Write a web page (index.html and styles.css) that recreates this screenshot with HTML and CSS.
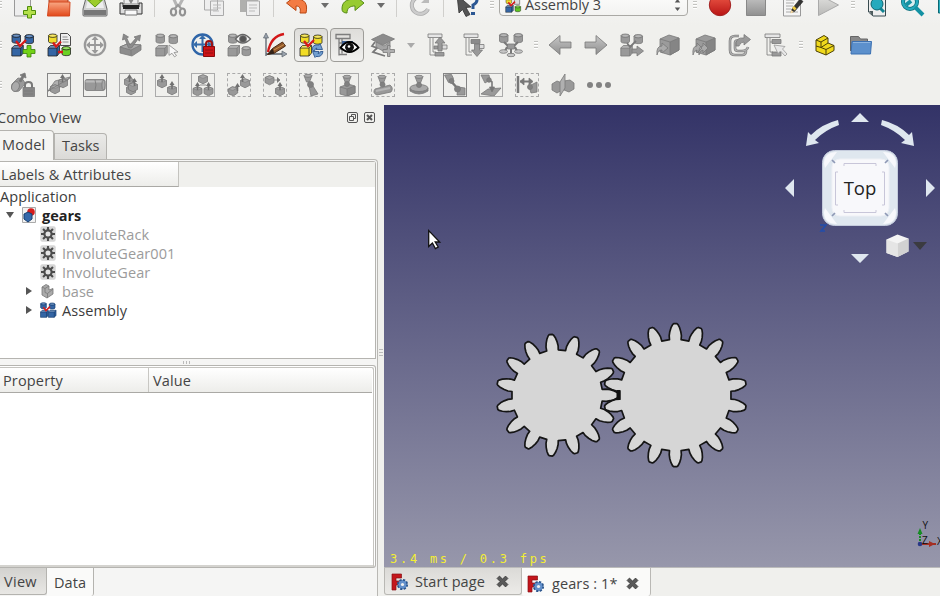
FILE: index.html
```html
<!DOCTYPE html>
<html lang="en">
<head>
<meta charset="utf-8">
<title>gears</title>
<link rel="stylesheet" href="styles.css">
</head>
<body>
<svg class="defs" aria-hidden="true">
  <defs>
    <linearGradient id="metal" x2="0" y2="1"><stop stop-color="#c6c6c6"/><stop offset="1" stop-color="#909090"/></linearGradient>
    <linearGradient id="pale" x2="0" y2="1"><stop stop-color="#e2e2e0"/><stop offset="1" stop-color="#b9b9b7"/></linearGradient>
    <linearGradient id="orange" x2="0" y2="1"><stop stop-color="#f9a884"/><stop offset="1" stop-color="#e2481a"/></linearGradient>
    <linearGradient id="red" x2="0" y2="1"><stop stop-color="#ee5a48"/><stop offset="1" stop-color="#b81414"/></linearGradient>
    <g id="cyl"><path d="M.5 2v6c0 2.200 8.500 2.200 8.500 0V2" fill="currentColor"/><ellipse cx="4.750" cy="2.200" rx="4.250" ry="1.700" fill="currentColor"/><ellipse cx="4.750" cy="2.200" rx="3" ry="1" fill="#fff" fill-opacity=".3" stroke="none"/></g>
    <g id="cube"><path d="M.5 3L3 .5h9V8L9.500 11h-9z" fill="currentColor"/><path d="M.5 3H9.500L12 .5M9.500 3v8" fill="none"/><path d="M1 3L3 .8h8.500L9.300 3z" fill="#fff" fill-opacity=".25" stroke="none"/></g>
    <g id="box"><path d="M.5 2.500L5 .7l4.500 1.800v5L5 9.800.5 7.500z" fill="currentColor"/><path d="M.5 2.500L5 4.500l4.500-2L5 .7z" fill="#fff" fill-opacity=".15" stroke-width=".5"/></g>
    <g id="cone"><path d="M0 1.500L2.500 8h3L8 1.500z" fill="currentColor"/><ellipse cx="4" cy="1.800" rx="4" ry="1.500" fill="#aaa"/></g>
    <path id="up" d="M0 4L2.500 0 5 4H3.300v4H1.700V4z" fill="#707070" stroke="none"/>
    <g id="trio"><use href="#cyl" x=".5" y=".5"/><use href="#cyl" x="13.500" y="1"/><use href="#cube" x=".3" y="12"/></g>
    <path id="joins" d="M5 8l4 5 6-6M9 14v-3" stroke="#d61b1b" stroke-width="2.300" fill="none"/>
    <g id="fclogo"><path d="M0 0h9.500v4H4v3h4v4H4v5H0z" fill="#c4161c" stroke="#861014" stroke-width=".7"/><circle cx="10.500" cy="10.500" r="4.600" fill="#6390cb" stroke="#2c568e" stroke-width="2" stroke-dasharray="2.200 1.400"/><circle cx="10.500" cy="10.500" r="3.800" fill="#6390cb"/><circle cx="10.500" cy="10.500" r="1.600" fill="#f0f0ee"/></g>
    <g id="gearicon"><rect x=".3" y=".3" width="15.400" height="15.400" rx="2" fill="#d6d6d6"/><path d="M8 1v14M1 8h14M3.050 3.050l9.900 9.900M12.950 3.050l-9.900 9.900" stroke="#4c4c4c" stroke-width="2.100"/><circle cx="8" cy="8" r="3.600" fill="#e4e4e4" stroke="#4c4c4c" stroke-width="2.200"/></g>
    <path id="cross" d="M1 3.200L3.200 1 6 3.800 8.800 1 11 3.200 8.200 6 11 8.800 8.800 11 6 8.200 3.200 11 1 8.800 3.800 6z" fill="#5a5a5a" stroke="#3e3e3e" stroke-width=".8"/>
  </defs>
</svg>

<header class="toolbars">
  <div class="bar">
    <i class="grip start"></i>
    <span class="tool"><svg viewBox="0 0 24 24"><path d="M3.500 0h16v23h-16z" fill="#eee" stroke="#999"/><path d="M16.500 13.500h4v4h4v4h-4v3.500h-4v-3.500h-4v-4h4z" fill="#b4e04a" stroke="#4e8d0c"/></svg></span>
    <span class="tool"><svg viewBox="0 0 24 24"><path d="M2 9V3h19v6" fill="#e77752" stroke="#a33a1b"/><path d="M.5 23L2 9h21l-.5 14z" fill="url(#orange)" stroke="#d4481f"/></svg></span>
    <span class="tool"><svg viewBox="0 0 24 24"><path d="M3 5h18l3 11v6q0 1-1 1H1q-1 0-1-1v-6z" fill="#d0d0d0" stroke="#666"/><path d="M1 17h22v5H1z" fill="#777"/><path d="M5 6h14l2 9H3z" fill="#eee"/><path d="M8 2h8v5h3.500L12 14 4.500 7H8z" fill="#9ccc2b" stroke="#5c9412"/></svg></span>
    <span class="tool"><svg viewBox="0 0 24 24"><path d="M5 0h14v11H5z" fill="#ececec" stroke="#888"/><path d="M9 6h6l-3 5z" fill="#888"/><path d="M1 10h3v4h16v-4h3v11H1z" fill="#ddd" stroke="#333"/><path d="M4 12h16v4H4z" fill="#222"/><path d="M6 17h12v5H6z" fill="#fafafa" stroke="#777"/></svg></span>
    <i class="sep"></i>
    <span class="tool"><svg viewBox="0 0 24 24"><path d="M5 0l6 13M20 0l-7 13" stroke="#b5b5b5" stroke-width="3"/><ellipse cx="7.500" cy="19" rx="2.600" ry="3.500" fill="none" stroke="#929292" stroke-width="2.200"/><ellipse cx="16.500" cy="19" rx="2.600" ry="3.500" fill="none" stroke="#929292" stroke-width="2.200"/><path d="M8.500 16l3.500-4 3.500 4" fill="none" stroke="#999" stroke-width="2"/></svg></span>
    <span class="tool"><svg viewBox="0 0 24 24"><path d="M2.500 2h13v15h-13zM8.500 8h13v14.500h-13z" fill="#eee" stroke="#aaa"/><path d="M11 12h8m-8 3h8m-8 3h6" stroke="#bbb"/></svg></span>
    <span class="tool"><svg viewBox="0 0 24 24"><path d="M2 2h18v17H2z" fill="#b0b0ae"/><path d="M8.500 8h13v14.500h-13z" fill="#eee" stroke="#aaa"/><path d="M11 12h8m-8 3h8m-8 3h6" stroke="#bbb"/></svg></span>
    <i class="sep"></i>
    <span class="tool"><svg viewBox="0 0 24 24"><path d="M1.500 10L11 2.500V6c9 0 12 5 10 14h-6c1-4 0-7-4-7v4.500z" fill="#f37b43" stroke="#b84713"/></svg></span>
    <i class="drop"></i>
    <span class="tool"><svg viewBox="0 0 24 24"><path d="M23 10L14 2.500V6C4 6 1 10 1 16q0 4 5 4c0-5 3-7 8-7v4.500z" fill="#97cb32" stroke="#578b17"/></svg></span>
    <i class="drop"></i>
    <i class="sep"></i>
    <span class="tool"><svg viewBox="0 0 24 24"><path d="M20 16A8.500 8.500 0 1 1 18 6" fill="none" stroke="#aaa" stroke-width="4"/><path d="M20 16A8.500 8.500 0 1 1 18 6" fill="none" stroke="#ccc" stroke-width="2.500"/><path d="M13 10h8V2z" fill="#bbb"/></svg></span>
    <i class="sep"></i>
    <span class="tool"><svg viewBox="0 0 24 24"><path d="M2 2l14 12-5 .5 4 7-4 2-3.500-7L4 20z" fill="#555" stroke="#333" stroke-width=".8"/><path d="M15 6q7-5 7 1 0 3-4 5v4" fill="none" stroke="#2c5793" stroke-width="3"/><path d="M16 19h4v3h-4z" fill="#2c5793"/></svg></span>
    <i class="grip mid"></i>
    <div class="workbench">
      <svg class="wbicon" viewBox="0 0 24 24" stroke="#222" stroke-width=".7"><use href="#cyl" x="1" y=".5" color="#f0dc2c"/><path d="M14 0h8v11h-8z" fill="#ddd"/><use href="#cube" x=".5" y="12" color="#3465a4"/><use href="#cyl" x="14.500" y="12.500" color="#5ec421"/><use href="#joins"/></svg>
      <span class="wbname">Assembly 3</span>
      <svg class="spin" viewBox="0 0 7 14"><path d="M.8 4.500l2.700-3.500 2.700 3.500zM.8 9.500L3.500 13l2.700-3.500z" fill="#555"/></svg>
    </div>
    <i class="grip mid"></i>
    <span class="tool"><svg viewBox="0 0 24 24"><circle cx="12" cy="12" r="10.700" fill="url(#red)" stroke="#a32222"/></svg></span>
    <span class="tool"><svg viewBox="0 0 24 24"><path d="M2.500 2.500h19v20h-19z" fill="url(#metal)" stroke="#888"/></svg></span>
    <span class="tool"><svg viewBox="0 0 24 24"><path d="M3.500 1h17v22h-17z" fill="#f5f5f5" stroke="#999"/><path d="M6 7h9M6 10h8M6 13h7M6 16h5M6 19h12" stroke="#aaa"/><path d="M12 16l8-10 3 2.500-8.500 10-3.500 1z" fill="#333" stroke="#222" stroke-width=".6"/><path d="M11 17l3 2-3.500 1.500z" fill="#f5d8a0"/><path d="M12 15l2.700 2.500 1.800-2-2.500-2.500z" fill="#efcb40"/></svg></span>
    <span class="tool"><svg viewBox="0 0 24 24"><path d="M2.500 1.500v21l20-10.500z" fill="url(#pale)" stroke="#aaa"/></svg></span>
    <i class="grip"></i>
    <span class="tool"><svg viewBox="0 0 24 24"><path d="M3.500 1h17v22H8l-4.500-4z" fill="#eee" stroke="#394b50"/><path d="M4 18h4v5z" fill="#4c5b5d"/><circle cx="12" cy="11" r="6" fill="#25aabd" stroke="#0c6571"/><path d="M15 15l4 4" stroke="#128391" stroke-width="3"/></svg></span>
    <span class="tool"><svg viewBox="0 0 24 24"><circle cx="9" cy="9" r="7" fill="#d7eef0" stroke="#0b6d7a" stroke-width="4"/><circle cx="9" cy="9" r="7" fill="none" stroke="#23a9bc" stroke-width="2.500"/><path d="M5 12l5-4M14 14l8 8" stroke="#1391a3" stroke-width="4"/></svg></span>
    <span class="tool"><svg viewBox="0 0 24 24"><path d="M1.500 1v19h18V1z" fill="#29aebf" stroke="#0b6873"/></svg></span>
  </div>

  <div class="bar">
    <i class="grip start"></i>
    <span class="tool"><svg class="line" viewBox="0 0 24 24"><use href="#trio" color="#3465a4"/><use href="#joins"/><path d="M16 12.500h4v4h4v4h-4v3.500h-4v-3.500h-4v-4h4z" fill="#73d216" stroke="#3b7d0b"/></svg></span>
    <span class="tool"><svg class="line" viewBox="0 0 24 24"><use href="#cyl" x="1" y=".5" color="#f0dc2c"/><path d="M13.500.5h7l3 3v9h-10z" fill="#eee"/><path d="M15.500 4h5m-5 2.500h6m-6 2.500h6" stroke="#777"/><use href="#cube" x=".5" y="12" color="#3465a4"/><use href="#cyl" x="14.500" y="13" color="#6cd224"/><path d="M6 9.500l3 4 5-5M11 19h5" stroke="#d61b1b" stroke-width="2.300" fill="none"/></svg></span>
    <span class="tool"><svg viewBox="0 0 24 24" fill="none"><circle cx="12" cy="12" r="10.200" stroke="#999" stroke-width="2.200"/><path d="M12 5v14M5 12h14" stroke="#999" stroke-width="1.800"/><path d="M12 3l3.500 4h-7zM12 21l3.500-4h-7zM3 12l4-3.500v7zM21 12l-4-3.500v7z" fill="#999"/></svg></span>
    <span class="tool"><svg class="gray" viewBox="0 0 24 24"><path d="M1 14l7-3 14 1v5l-9 6L1 20z" fill="#8d8d8d"/><path d="M1 14l11 3 10-5-14-1z" fill="#a8a8a8"/><path d="M12 17v5.500" fill="none"/><path d="M9.500 15L6 6 3.500 7 4.500 1l5 3-1.800 1L11 12l6-7-2-1 6.500-2-1 6-1.800-1.500L12.500 15z" fill="#8b8b8b"/></svg></span>
    <span class="tool"><svg class="gray" viewBox="0 0 24 24"><use href="#trio"/><path d="M14 12l9 7-4 .5 2.500 3-2 1.300-2.500-3.500-3 2z" fill="#f8f8f8" stroke="#888"/></svg></span>
    <span class="tool"><svg viewBox="0 0 24 24" fill="none"><circle cx="11.500" cy="11.500" r="10" stroke="#2f65a8" stroke-width="2.300"/><path d="M11.500 5v14M5 11.500h14" stroke="#356ba9" stroke-width="2"/><path d="M11.500 2l3.500 4H8zM2 11.500L6 8v7zM21 11.500L17 8v7z" fill="#356ba9"/><path d="M15 14v-3q0-3 3-3t3 3v3" stroke="#9d1010" stroke-width="2"/><path d="M12.500 13.500h11v10h-11z" fill="#ce1216" stroke="#870b0d"/><path d="M14 17h8m-8 3h8" stroke="#921013"/></svg></span>
    <span class="tool"><svg class="gray" viewBox="0 0 24 24"><use href="#cyl" x="1" y=".5"/><use href="#cube" x=".5" y="12"/><use href="#cyl" x="14.500" y="13"/><path d="M8.500 6q7-9 15 0-8 8-15 0z" fill="#f5f5f5" stroke="#666" stroke-width="1.300"/><circle cx="16" cy="6" r="3.500" fill="#555"/></svg></span>
    <span class="tool"><svg viewBox="0 0 24 24" fill="none"><path d="M3 23V3M3 21h18" stroke="#59616b" stroke-width="1.300"/><path d="M.5 5L3 0l2.500 5zM19 18l5 3-5 3z" fill="#9aa3ad" stroke="#59616b" stroke-width=".7"/><path d="M5 19Q8 3 21 1" stroke="#d31818" stroke-width="2.300"/><path d="M4.500 21.500l5-6 10-6.500 3 4-11 7z" fill="#91572b" stroke="#4d2a10"/><path d="M4.500 21.500l5-6 2 5z" fill="#332319"/><path d="M11 17l10-5.500" stroke="#c9924e"/></svg></span>
    <span class="tool on"><svg class="line" viewBox="0 0 24 24"><use href="#cyl" x="1" y=".5" color="#f1dc25"/><use href="#cyl" x="14" y="1.500" color="#f1dc25"/><use href="#cube" x=".5" y="12" color="#f1dc25"/><use href="#joins"/><path d="M13 17q0-6 7-5l1-1.500 2.500 6h-6.500l1-1.500q-2 0-2.500 3zM24 18.500q-1 6-7 5l-1 1-2.500-6h6.500l-1 2q2 0 2.500-2z" fill="#729fcf" stroke="#204a87"/></svg></span>
    <span class="tool on"><svg viewBox="0 0 24 24" fill="none"><path d="M1 1.500h14v4H1zM4 5.500v17M4 10h4M4 16h4M4 21.500h8M7 5.500v15" stroke="#7d7d7d" stroke-width="1.300"/><path d="M7 8h11v5H7z" fill="#3d5f92"/><path d="M5.500 14.500q9-11 18 0-9 9-18 0z" fill="#fff" stroke="#000" stroke-width="1.800"/><circle cx="14.500" cy="14.200" r="4.400" fill="#111"/><circle cx="14" cy="13.500" r="1.300" fill="#fff"/></svg></span>
    <span class="tool"><svg class="gray" viewBox="0 0 24 24"><path d="M4 9l-3 4 5 2-4 4 12 4" fill="none" stroke-width="1.800"/><path d="M5 9v5l7 4 7-4V9l-6 4z" fill="#a4a4a4"/><path d="M.5 6.500L12 1l11.500 5L12 12z" fill="#8c8c8c"/><path d="M16.500 12.500h2.500v4h4.500v3H19v4h-2.500v-4h-4.500v-3h4.500z" fill="#b0b0b0"/></svg></span>
    <i class="drop dim"></i>
    <span class="tool"><svg class="gray" viewBox="0 0 24 24"><path d="M1 1h14v3.500H1z" fill="#e6e6e6"/><path d="M3 5v17h6M6 5v14h3" fill="none"/><path d="M8 19.500h9v3.500H8zM7 13h4v3H7z" fill="#9a9a9a"/><path d="M15 12h5v4h-5z" fill="#ddd"/><path d="M13 4l5 6h-3v8h-4v-8H8z" fill="#999"/></svg></span>
    <span class="tool"><svg class="gray" viewBox="0 0 24 24"><path d="M1 1h14v3.500H1z" fill="#e6e6e6"/><path d="M3 5v17h6M6 5v14h3" fill="none"/><path d="M16 11.500h5v4h-5z" fill="#ddd"/><path d="M8 6.500h9v4H8z" fill="#8b8b8b"/><path d="M11.500 11h5v6h3L14 23.500 8.500 17h3z" fill="#999"/></svg></span>
    <span class="tool"><svg class="gray" viewBox="0 0 24 24"><use href="#cyl" x="0" y="0"/><use href="#cyl" x="14.500" y="0"/><path d="M5 9l4 4M19 9l-4 4M12 14v7M8 14l-2 4m10-4l2 4" fill="none" stroke-width="2"/><path d="M8.500 11h7v5h-7z" fill="#999"/><ellipse cx="4.500" cy="18.500" rx="4" ry="1.800" fill="#c6c6c6"/><ellipse cx="19.500" cy="18.500" rx="4" ry="1.800" fill="#c6c6c6"/><ellipse cx="12" cy="22" rx="4" ry="1.700" fill="#c6c6c6"/></svg></span>
    <i class="grip"></i>
    <span class="tool"><svg class="gray" viewBox="0 0 24 24"><path d="M1 12L12 2.500V9h11v6H12v6.500z" fill="url(#metal)"/></svg></span>
    <span class="tool"><svg class="gray" viewBox="0 0 24 24"><path d="M23 12L12 2.500V9H1v6h11v6.500z" fill="url(#metal)"/></svg></span>
    <span class="tool"><svg class="gray" viewBox="0 0 24 24"><use href="#trio"/><path d="M7 10l3 4 6-6" fill="none" stroke-width="1.800"/><path d="M12 16h5v-3l6.500 5-6.500 5v-3h-5z" fill="#999"/></svg></span>
    <span class="tool"><svg class="gray" viewBox="0 0 24 24"><path d="M4 6l9-4 10 3v12l-9 5-10-3z" fill="#9b9b9b"/><path d="M4 6l10 3 9-4v12l-9 5V9" fill="#858585" /><path d="M1 22q-1-9 5-9v-3l6 5-6 5v-3q-4 0-5 5z" fill="#aaa"/></svg></span>
    <span class="tool"><svg class="gray" viewBox="0 0 24 24"><path d="M4 6l9-4 10 3v12l-9 5-10-3z" fill="#9b9b9b"/><path d="M4 6l10 3 9-4v12l-9 5V9" fill="#858585" /><path d="M1 22q-1-9 4-9v-3l5 5-5 5v-3q-3 0-4 5zM7 22q-1-9 4-9v-3l5 5-5 5v-3q-3 0-4 5z" fill="#aaa"/></svg></span>
    <span class="tool"><svg class="gray" viewBox="0 0 24 24"><path d="M11 3H7Q2 3 2 8v9q0 5 5 5h7q4 0 4-4M11 7.500H9Q7 7.500 7 10v5q0 3 3 3h4q5 0 6-4" fill="none" stroke="#808080" stroke-width="2.600"/><path d="M11 3H7Q2 3 2 8v9q0 5 5 5h7q4 0 4-4M11 7.500H9Q7 7.500 7 10v5q0 3 3 3h4q5 0 6-4" fill="none" stroke="#b2b2b2" stroke-width="1.200"/><path d="M8 13q-1-9 8-8V1.500l6.500 5L16 12V9q-4 0-5 4z" fill="#999"/></svg></span>
    <span class="tool"><svg class="gray" viewBox="0 0 24 24"><path d="M1 1h15v3.500H1z" fill="#e6e6e6"/><path d="M3 5v17h5M6 5v14h3M6 9h3" fill="none"/><path d="M8 6.500h9v4H8zM8 19h9v4H8z" fill="#999"/><path d="M10 12l11 1.500-2.500 2.500 4.500 5-2 2-4.500-5-2.500 2.500z" fill="#e8e8e8" stroke="#999"/></svg></span>
    <i class="grip"></i>
    <span class="tool"><svg viewBox="0 0 24 24" stroke="#4c4106" stroke-linejoin="round"><path d="M3 7l8-4.500 4 2.500v5l6 2.500v5l-8 4.500-10-4z" fill="#f0d91d"/><path d="M3 7l5 2 7-4M8 9v5.500L13 16.500l8-4M13 16.500V22M3 13l5 1.500 7-4.500" fill="none"/></svg></span>
    <span class="tool"><svg viewBox="0 0 24 24"><path d="M1.500 18V3.500h8l2 2.500h7v6" fill="#888" stroke="#666"/><path d="M3 8.500h19.500l-1 12.500H2z" fill="#5c90cc" stroke="#3b70b2"/><path d="M4 9.500h17.500" stroke="#8db4df"/></svg></span>
  </div>

  <div class="bar">
    <i class="grip start"></i>
    <span class="tool"><svg class="gray" viewBox="0 0 24 24"><path d="M1 11l6-6q6 0 7 6l-6 7q-6 2-7.500-3z" fill="#999"/><ellipse cx="4.500" cy="13.500" rx="3.800" ry="5" transform="rotate(20 4.500 13.500)" fill="#aaa"/><path d="M8 8l3-5-2-1 5-2 1 5-2-1-3 5z" fill="#777"/><path d="M14 15v-3q0-3 3.500-3t3.500 3v3" fill="none" stroke-width="2"/><path d="M12 14.500h11.500v9H12z" fill="#858585"/><path d="M13 18h9m-9 3h9"/></svg></span>
    <span class="tool"><svg class="gray boxed" viewBox="0 0 24 24"><path d="M1 18L8 8l15-4-7 9z" fill="#b0b0b0"/><use href="#box" x="3" y="11"/><use href="#box" x="11" y="5"/><use href="#up" x="13" y="1"/><path d="M1 18l22-13"/></svg></span>
    <span class="tool"><svg class="gray boxed" viewBox="0 0 24 24"><rect x="2" y="6.500" width="20" height="11" rx="2" fill="#999"/><path d="M2.500 8.500h19" stroke="#bbb" stroke-width="2"/><path d="M12 7q2 5 0 10" fill="none"/><ellipse cx="20.500" cy="12" rx="1.600" ry="5" fill="#aaa"/></svg></span>
    <span class="tool"><svg class="gray boxed soft" viewBox="0 0 24 24"><use href="#box" x="5" y="4"/><use href="#box" x="7" y="12"/><use href="#box" x="9" y="9"/><use href="#up" x="8" y="1"/><use href="#up" x="13" y="5"/></svg></span>
    <span class="tool"><svg class="gray boxed soft" viewBox="0 0 24 24"><use href="#box" x="2" y="5"/><use href="#box" x="12" y="12"/><use href="#up" x="4.500" y="1"/><use href="#up" x="14.500" y="8"/></svg></span>
    <span class="tool"><svg class="gray boxed soft" viewBox="0 0 24 24"><use href="#box" x="7" y="1"/><use href="#box" x="1.500" y="13"/><use href="#box" x="12.500" y="13"/><use href="#up" x="4" y="9"/><use href="#up" x="15" y="9"/><path d="M9 12h6"/></svg></span>
    <span class="tool"><svg class="gray dashed" viewBox="0 0 24 24"><use href="#box" x="1" y="13" transform="rotate(-8 6 18)"/><use href="#box" x="13" y="5"/><use href="#up" x="13" y="1"/><use href="#up" x="8" y="10"/></svg></span>
    <span class="tool"><svg class="gray dashed" viewBox="0 0 24 24"><use href="#box" x="1.500" y="2"/><use href="#box" x="12" y="13"/><use href="#up" x="14.500" y="9"/><path d="M11 7h5M14 4.500l3 2.500-3 2.500" fill="#777"/></svg></span>
    <span class="tool"><svg class="gray dashed" viewBox="0 0 24 24"><use href="#cone" x="5" y="1"/><path d="M10 13h4l5 8-7 2z" fill="#999"/><circle cx="11.500" cy="11.500" r="3" fill="#808080"/></svg></span>
    <span class="tool"><svg class="gray boxed soft" viewBox="0 0 24 24"><path d="M5 14l8-3 7 2v7l-8 3-7-2z" fill="#999"/><path d="M5 14l7 2 8-3v7l-8 3v-7" fill="#888"/><use href="#cone" x="8" y="2"/><circle cx="12" cy="11" r="2.500" fill="#808080"/></svg></span>
    <span class="tool"><svg class="gray dashed" viewBox="0 0 24 24"><path d="M4 16l15-4q4 3 1 7L6 22q-5-2-2-6z" fill="#999"/><path d="M5 18l14-3" stroke="#b5b5b5" stroke-width="2"/><use href="#cone" x="7" y="2"/><circle cx="11.500" cy="11.500" r="2.500" fill="#808080"/></svg></span>
    <span class="tool"><svg class="gray boxed soft" viewBox="0 0 24 24"><path d="M3 15v3q9 6 18 0v-3" fill="#888"/><ellipse cx="12" cy="15" rx="9" ry="3.500" fill="#aaa"/><use href="#cone" x="8" y="2"/><circle cx="12" cy="12" r="2.500" fill="#808080"/></svg></span>
    <span class="tool"><svg class="gray boxed" viewBox="0 0 24 24"><path d="M1.500 2l7-.5 2 4-5 4z" fill="#999"/><path d="M15 14l7 1v7h-8z" fill="#999"/><path d="M7 7l8 9" stroke-width="2.500"/><circle cx="8.500" cy="8" r="2.500" fill="#808080"/><circle cx="14.500" cy="16" r="3" fill="#808080"/></svg></span>
    <span class="tool"><svg class="gray boxed soft" viewBox="0 0 24 24"><path d="M2 2l8 0 1 5-5 3zM2 21l7-5 13-1-7 8z" fill="#999"/><path d="M9 6l4 3v9" fill="none" stroke-width="1.600"/><path d="M10.500 14h5L13 19z" fill="#777"/><circle cx="10" cy="7" r="2.300" fill="#808080"/></svg></span>
    <span class="tool"><svg class="gray dashed" viewBox="0 0 24 24"><path d="M3 3v17" stroke-width="2.500"/><path d="M5 8.500h12" stroke-width="2"/><path d="M9 5L5 8.500 9 12zM14 5l4 3.500-4 3.500z" fill="#777"/><path d="M14 13l8-4v10l-6 1z" fill="#999"/><circle cx="15" cy="14" r="2.500" fill="#808080"/></svg></span>
    <span class="tool"><svg class="gray" viewBox="0 0 24 24"><path d="M1 11l5-3 5 2v7l-5 3-5-3zM13 8l6-1 4 3v6l-5 3-5-2z" fill="#999"/><path d="M9 9l5-8v14l-5 8z" fill="#b0b0b0"/></svg></span>
    <span class="tool"><svg viewBox="0 0 24 24" fill="#828282"><circle cx="3" cy="12" r="3"/><circle cx="12" cy="12" r="3"/><circle cx="21" cy="12" r="3"/></svg></span>
  </div>
</header>

<main class="workspace">
  <aside class="combo">
    <div class="docktitle"><span class="t-combo">Combo View</span>
      <svg class="dockbuttons" viewBox="0 0 28 11" fill="none" stroke="#555"><rect x=".5" y=".5" width="10" height="10" rx="1.500"/><path d="M4.500 4V2.500h4v4H7"/><path d="M2.500 4.500h4v4h-4z"/><rect x="17.500" y=".5" width="10" height="10" rx="1.500"/><path d="M20 3l5 5m0-5l-5 5" stroke-width="2"/></svg>
    </div>
    <div class="toptabs"><div class="tab active t-model">Model</div><div class="tab t-tasks">Tasks</div></div>
    <div class="pane">
      <section class="tree">
        <div class="treehead"><span class="colhead t-labels">Labels &amp; Attributes</span></div>
        <div class="rows">
          <div class="row app"><span class="t-app">Application</span></div>
          <div class="row"><i class="expander open"></i><svg class="ri doc" viewBox="0 0 16 16"><path d="M1.500.5h13v15h-13z" fill="#f2f2f2" stroke="#aaa"/><circle cx="10" cy="5" r="3.800" fill="#d51c1c"/><path d="M3 7l4-2 4 2v5l-4 3-4-3z" fill="#3568a9" stroke="#173e6f"/></svg><b>gears</b></div>
          <div class="row child off"><svg class="ri" viewBox="0 0 16 16"><use href="#gearicon"/></svg><span class="t-g">InvoluteRack</span></div>
          <div class="row child off"><svg class="ri" viewBox="0 0 16 16"><use href="#gearicon"/></svg><span class="t-g">InvoluteGear001</span></div>
          <div class="row child off"><svg class="ri" viewBox="0 0 16 16"><use href="#gearicon"/></svg><span class="t-g">InvoluteGear</span></div>
          <div class="row child off"><i class="expander"></i><svg class="ri" viewBox="0 0 16 16" stroke="#777" stroke-width=".8"><path d="M2 4l4-2.500L9 3v4l4-1.500V11l-6 4-5-3z" fill="#aaa"/><path d="M2 4l3 1.500L9 3M5 5.500v4l2.500 1L13 6M7.500 10.500V15" fill="none"/></svg><span>base</span></div>
          <div class="row child"><i class="expander"></i><svg class="ri" viewBox="0 0 24 24" stroke="#173e6f"><use href="#trio" color="#3465a4"/><use href="#cube" x="12" y="12" color="#3465a4"/><use href="#joins"/></svg><span class="t-asm">Assembly</span></div>
        </div>
      </section>
      <div class="splitter"><i></i><i></i><i></i></div>
      <section class="props">
        <div class="prophead"><span class="t-prop">Property</span><span class="t-value">Value</span></div>
        <div class="propbody"></div>
      </section>
      <div class="bottomtabs"><div class="tab t-view">View</div><div class="tab active t-data">Data</div></div>
    </div>
    <i class="vgrip"></i>
  </aside>

  <section class="mdi">
    <div class="view">
      <svg class="scene" viewBox="384 105 556 462">
        <g class="gear"><path id="gear-right"/><path id="gear-left"/></g>
        <path d="M616.500 390h4v10h-4z" fill="#111"/>
        <g class="navi">
          <path d="M851 122l9-9 9 9zM851 254l9 9 9-9zM794 179l-9 9 9 9zM926 179l9 9-9 9z"/>
          <path d="M838 120q-16 4-27 15l-3-3-2 14 13-3-4-3q10-10 24-15zM882 120q16 4 27 15l3-3 2 14-13-3 4-3q-10-10-24-15z"/>
        </g>
        <rect x="822.500" y="150.500" width="75" height="75" rx="12" fill="#dfe7ef" stroke="#c4cbdc"/>
        <path d="M824 164q0-12 13-12l-12 16zM896 164q0-12-13-12l12 16zM824 212q0 12 13 12l-12-16zM896 212q0 12-13 12l12-16z" fill="#f7f8fc"/>
        <rect x="832" y="159" width="57" height="57" rx="8" fill="#f8f8fb" stroke="#eef0f5"/>
        <path d="M832 160l3 3M888 160l-3 3M832 216l3-3M888 216l-3-3" stroke="#8e98b5" stroke-width="1.700"/>
        <path d="M844 166v-2.500h32v2.500M844 210v2.500h32V210M838 172h-2.500v33h2.500M882 172h2.500v33H882" fill="none" stroke="#c8c6d9"/>
        <text class="top" x="860" y="194.500" text-anchor="middle">Top</text>
        <path d="M820 225h6l-5 6h4" fill="none" stroke="#234eaa" stroke-width="1.600"/>
        <path d="M886.500 239.500l11-5 11 4v13l-11 5.500-11-4z" fill="#f4f4f4"/><path d="M897.500 243.500l11-5v13l-11 5.500z" fill="#d2d2d2"/><path d="M886.500 239.500l11 4V257l-11-4z" fill="#e5e5e5"/>
        <path d="M913 242h14l-7 8z" fill="#3b3b40"/>
        <g class="axes"><path d="M920 544v-15" stroke="#168c24" stroke-width="2" stroke-dasharray="2 1"/><path d="M917.500 534l2.500-6 2.500 6z" fill="#168c24"/><path d="M921 544h15" stroke="#a43024" stroke-width="2"/><path d="M929 541l6 3-6 3z" fill="#a43024"/><circle cx="920" cy="544" r="2.300" fill="#293886"/><text x="922.500" y="529">Y</text><text x="922" y="544">Z</text><text x="937" y="545">X</text></g>
        <path d="M428.700 230.500v16l3.700-3.500 3 5.500 2.800-1.500-3-5h4.500z" fill="#fff" stroke="#111" stroke-width="1.300"/>
      </svg>
      <span class="fps">3.4 ms / 0.3 fps</span>
    </div>
    <div class="doctabs">
      <div class="doctab"><svg class="fc" viewBox="0 0 16 16"><use href="#fclogo"/></svg><span class="t-start">Start page</span><svg class="x" viewBox="0 0 12 12"><use href="#cross"/></svg></div>
      <div class="doctab active"><svg class="fc" viewBox="0 0 16 16"><use href="#fclogo"/></svg><span class="t-gears">gears : 1*</span><svg class="x" viewBox="0 0 12 12"><use href="#cross"/></svg></div>
    </div>
  </section>
</main>
<script src="gears.js"></script>
</body>
</html>
```
FILE: styles.css
```css
* { box-sizing: border-box; }
body { margin: 0; width: 940px; height: 596px; overflow: hidden; background: #f0f0ed; color: #444; font: 14.5px/19px "Open Sans", "Noto Sans", sans-serif; }
svg { display: block; overflow: visible; }
.defs { position: absolute; width: 0; height: 0; }

.toolbars { height: 105px; overflow: hidden; display: flex; flex-direction: column; justify-content: flex-end; background: linear-gradient(#f4f4f3, #f0f0ed 25px); }
.bar { display: flex; align-items: center; height: 40px; flex: none; width: 970px; }
.tool { width: 36px; height: 34px; flex: none; display: flex; align-items: center; justify-content: center; }
.tool svg { width: 24px; height: 24px; }
.tool.on { width: 34px; margin: 0 1px; border: 1px solid #9e9d99; border-radius: 4px; background: linear-gradient(#deddda, #f1f1ef); }
.line { stroke: #222; stroke-width: .8; }
.gray { color: #999; stroke: #787878; stroke-width: .8; }
.boxed { outline: 1px solid #858585; outline-offset: -1px; }
.soft { outline-color: #ababab; }
.dashed { outline: 1px dashed #aaa; outline-offset: -1px; }
.grip { width: 13px; height: 11px; flex: none; background: repeating-linear-gradient(#c3c3c0 0 1px, #fff 1px 2px, transparent 2px 3px) center / 4px 8px no-repeat; }
.grip.mid { width: 14px; }
.grip.start { width: 5px; background-position: -2px center; }
.sep { width: 11px; height: 24px; flex: none; background: linear-gradient(#d0cfcc, #d0cfcc) center / 1px 100% no-repeat; }
.drop { width: 20px; flex: none; display: flex; justify-content: center; }
.drop::after { content: ""; border: 4px solid transparent; border-top: 5px solid #6c6c6c; border-bottom: 0; }
.drop.dim::after { border-top-color: #aaa; }
.workbench { width: 189px; height: 30px; margin-top: -9px; flex: none; border: 1px solid #aaa9a5; border-radius: 4px; background: linear-gradient(#fff, #f3f3f1); display: flex; align-items: center; padding: 8px 6px 0 5px; }
.wbicon { width: 16px; height: 16px; margin-right: 4px; }
.wbname { flex: 1; letter-spacing: -.05px; }
.spin { width: 7px; height: 14px; }

.workspace { display: flex; height: 491px; }
.combo { width: 384px; flex: none; display: flex; flex-direction: column; position: relative; }
.docktitle { height: 25px; display: flex; justify-content: space-between; align-items: center; padding-right: 9px; }
.docktitle span { margin-left: -3px; }
.dockbuttons { width: 28px; height: 11px; }
.toptabs { height: 29px; display: flex; align-items: flex-end; }
.toptabs .tab { height: 26px; width: 53px; border: 1px solid #b4b3af; border-bottom: 0; border-radius: 0 4px 0 0; background: linear-gradient(#eaeae8, #dbdad7); padding: 2px 0 0 7px; }
.toptabs .tab.active { height: 30px; width: 54px; margin-bottom: -1px; background: #f5f5f3; border-left: 0; padding: 4px 0 0 2px; z-index: 1; letter-spacing: .2px; }
.pane { width: 378px; height: 437px; border: 1px solid #b9b8b4; border-width: 1px 1px 0 0; border-radius: 0 4px 0 0; background: #f5f5f4; display: flex; flex-direction: column; padding: 1px 1px 0 0; }
.tree { height: 198px; border: 1px solid #b5b4b0; border-left: 0; border-radius: 0 3px 0 0; background: #fff; }
.treehead { height: 25px; background: #f0f0ed; }
.colhead { display: block; width: 179px; height: 25px; padding: 3px 0 0 1px; background: linear-gradient(#fff, #ededea); border-right: 1px solid #c4c3bf; border-bottom: 1px solid #aaa9a5; letter-spacing: .1px; }
.row { height: 19px; display: flex; align-items: center; padding-left: 21px; position: relative; color: #3c3c3c; white-space: nowrap; }
.row.app { padding-left: 0; letter-spacing: .1px; }
.row.child { padding-left: 40px; }
.row.off { color: #9b9b9b; }
.ri { width: 16px; height: 16px; margin: -1px 6px 0 0; flex: none; }
.doc { margin-right: 5px; }
.t-g { letter-spacing: .07px; }
.t-asm { letter-spacing: .1px; }
.row b { color: #222; }
.expander { position: absolute; left: 26px; top: 5px; border: 4px solid transparent; border-left: 6px solid #555; border-right: 0; }
.expander.open { left: 6px; top: 6px; border: 4px solid transparent; border-top: 6px solid #555; border-bottom: 0; }
.splitter { height: 7px; display: flex; gap: 2px; justify-content: center; padding: 2px 4px 1px 0; }
.splitter i { width: 1px; background: #bbb; }
.props { height: 203px; border: 1px solid #b5b4b0; border-left: 0; border-radius: 0 3px 3px 0; box-shadow: inset -1px 1px #fff, inset -2px 2px #c5c4c0, inset 0 -2px #d4d3cf; background: #fff; padding: 2px 3px 2px 0; }
.prophead { display: flex; height: 25px; border-bottom: 1px solid #aaa9a5; background: linear-gradient(#fff, #ededea); }
.prophead span { padding: 3px 0 0 4px; letter-spacing: .15px; }
.prophead .t-prop { width: 149px; padding-left: 3px; border-right: 1px solid #c8c7c3; }
.bottomtabs { height: 28px; display: flex; }
.bottomtabs .tab { width: 47px; height: 27px; border: 1px solid #b4b3af; border-width: 0 1px 1px 0; border-radius: 0 0 3px 0; background: linear-gradient(#d3d2cf, #e8e7e4); padding: 4px 0 0 4px; letter-spacing: .3px; }
.bottomtabs .tab.active { height: 28px; background: #fafaf9; border-bottom: 0; padding: 5px 0 0 7px; letter-spacing: .1px; }
.vgrip { position: absolute; left: 379px; top: 244px; width: 4px; height: 8px; background: repeating-linear-gradient(#bbb 0 1px, transparent 1px 3px); }

.mdi { width: 556px; display: flex; flex-direction: column; }
.view { height: 462px; position: relative; overflow: hidden; background: linear-gradient(#333367, #9797ab); }
.scene { width: 556px; height: 462px; }
.gear { fill: #d6d6d6; stroke: #151515; stroke-width: 1.700; stroke-linejoin: round; }
.navi { fill: #dfe7ef; }
.top { font-size: 18.5px; fill: #222; }
.axes text { font-size: 10px; fill: #111; }
.fps { position: absolute; left: 6px; bottom: -1px; color: #f3ee32; font: 12px/18px "DejaVu Sans Mono", monospace; letter-spacing: 2.750px; }
.doctabs { height: 29px; display: flex; border-top: 1px solid #bbb; background: #f0f0ed; }
.doctab { width: 138px; height: 27px; display: flex; align-items: center; padding: 1px 12px 0 7px; border: 1px solid #b9b8b4; border-width: 0 1px 1px 1px; border-radius: 0 0 3px 3px; background: linear-gradient(#dbdad7, #ecebe8); white-space: nowrap; }
.doctab.active { width: 129px; height: 28px; padding: 3px 11px 0 6px; border-left: 0; border-bottom: 0; background: #fafaf9; }
.fc { width: 16px; height: 16px; margin-right: 7px; }
.doctab.active .fc { margin-right: 8px; }
.doctab span { flex: 1; letter-spacing: .1px; }
.x { width: 13px; height: 13px; }
```
FILE: gears.js
```javascript
// Outline of a spur gear; first is the angle of one tooth in degrees.
function gearPath(cx, cy, teeth, root, tip, first) {
  const out = [];
  const profile = [[0, -5.8], [0.25, -6.1], [0.5, -5.5], [0.75, -4.3], [0.94, -2.7], [1, -1.6]];
  const points = profile.concat(profile.map(([r, w]) => [r, -w]).reverse());
  for (let i = 0; i < teeth; i++) {
    const a = (first + i * 360 / teeth) * Math.PI / 180;
    for (const [f, w] of points) {
      const r = root + (tip - root) * f;
      const x = cx + r * Math.cos(a) - w * Math.sin(a);
      const y = cy + r * Math.sin(a) + w * Math.cos(a);
      out.push(x.toFixed(2) + " " + y.toFixed(2));
    }
  }
  return "M" + out.join("L") + "Z";
}
document.getElementById("gear-left").setAttribute("d", gearPath(557.2, 395.2, 15, 45, 61, 0));
document.getElementById("gear-right").setAttribute("d", gearPath(675.3, 395.2, 18, 55.5, 71.5, 10));
```
